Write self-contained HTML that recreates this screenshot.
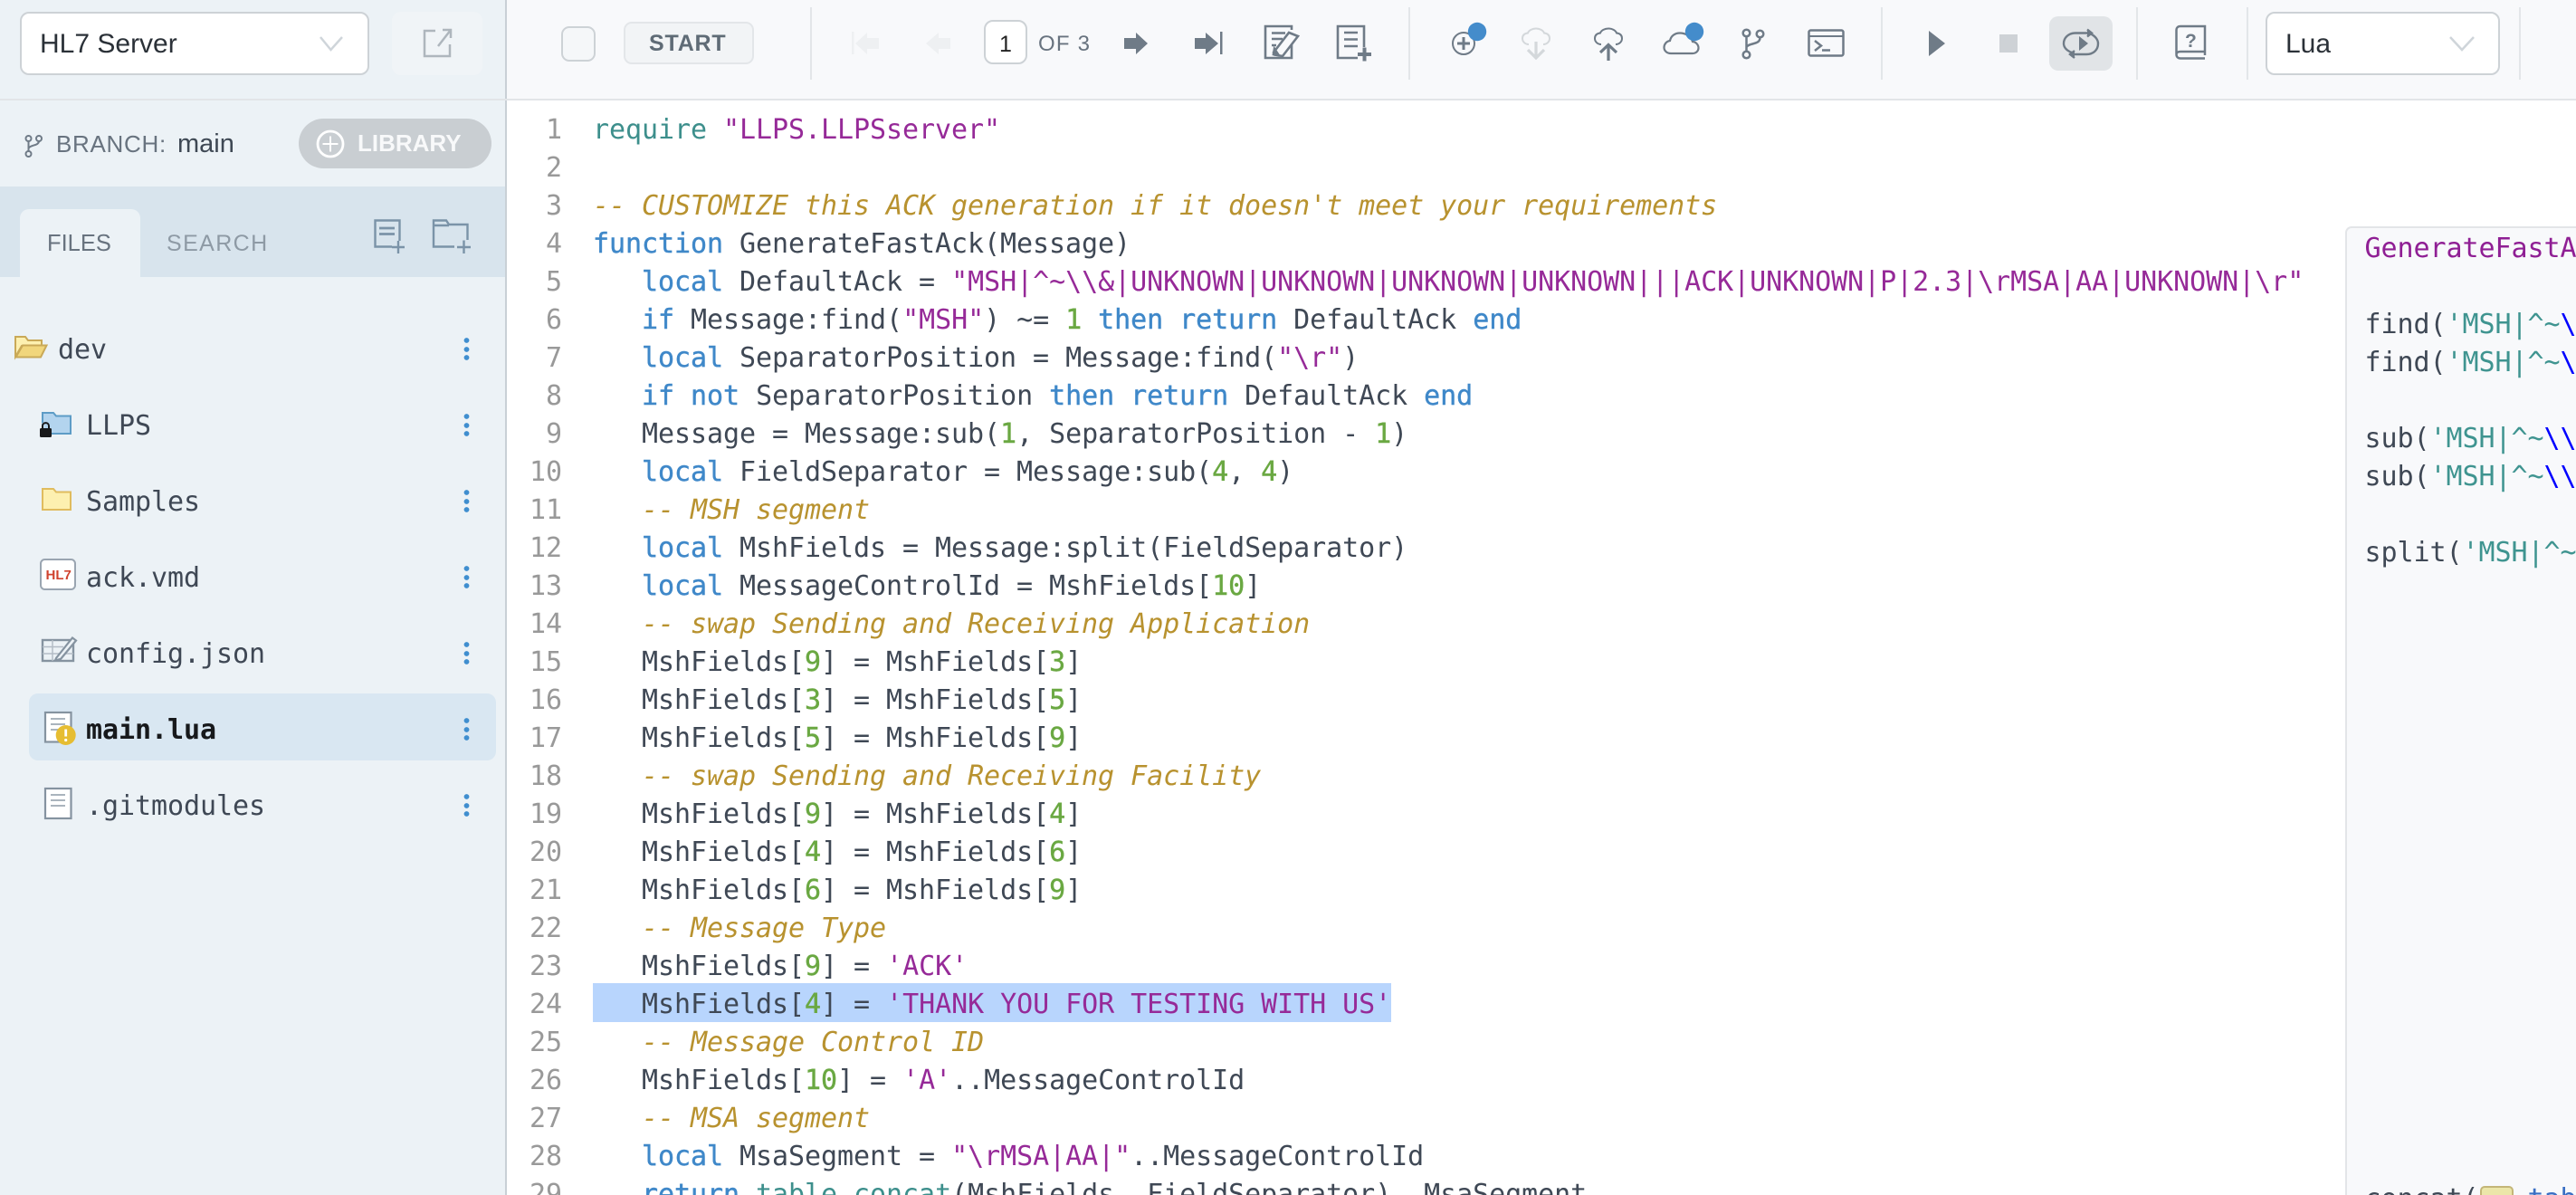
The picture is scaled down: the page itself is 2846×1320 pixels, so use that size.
<!DOCTYPE html>
<html>
<head>
<meta charset="utf-8">
<title>HL7 Server</title>
<style>
html,body{margin:0;padding:0;background:#fff}
#p{position:relative;width:2846px;height:1320px;overflow:hidden;background:#fff;font-family:"Liberation Sans",sans-serif}
.a{position:absolute;white-space:pre}
.m{font-family:"DejaVu Sans Mono","Liberation Mono",monospace;font-size:30px;letter-spacing:-.06px;line-height:42px;color:#3f4855}
.k{color:#3f88c9;-webkit-text-stroke:.4px #3f88c9}.s{color:#962a98}.c{color:#b8922f;font-style:italic}.n{color:#6aa842;-webkit-text-stroke:.4px #6aa842}.t{color:#3d8f8c}
.f{left:95px;height:42px}
.box{position:absolute;box-sizing:border-box}
svg{position:absolute;left:0;top:0}
.q{color:#3f9490}.b{color:#0000ff}
</style>
</head>
<body>
<div id="p">
<!-- backgrounds -->
<div class="box" style="left:0;top:0;width:558px;height:1320px;background:#ecf2f6"></div>
<div class="box" style="left:558px;top:0;width:2px;height:1320px;background:#c9d0d6"></div>
<div class="box" style="left:560px;top:0;width:2286px;height:109px;background:#f8f9fb"></div>
<div class="box" style="left:0;top:109px;width:2846px;height:2px;background:#e2e5e8"></div>
<div class="box" style="left:0;top:206px;width:558px;height:100px;background:#d8e4ed"></div>
<div class="box" style="left:22px;top:231px;width:133px;height:75px;background:#ecf2f6;border-radius:10px 10px 0 0"></div>
<div class="box" style="left:32px;top:766px;width:516px;height:74px;background:#d9e7f2;border-radius:10px"></div>

<!-- selects & buttons -->
<div class="box" style="left:22px;top:13px;width:386px;height:70px;background:#fff;border:2.5px solid #cdd2d6;border-radius:10px"></div>
<div class="box" style="left:433px;top:13px;width:100px;height:70px;background:#f0f4f7;border-radius:10px"></div>
<div class="box" style="left:620px;top:29px;width:38px;height:39px;background:#f5f7f9;border:2.5px solid #cdd2d6;border-radius:9px"></div>
<div class="box" style="left:689px;top:24px;width:144px;height:47px;background:#f2f4f6;border:2.5px solid #e3e6e9;border-radius:9px"></div>
<div class="box" style="left:1087px;top:22px;width:48px;height:49px;background:#fff;border:2.5px solid #cdd2d6;border-radius:10px"></div>
<div class="box" style="left:2264px;top:18px;width:70px;height:60px;background:#e1e4e7;border-radius:10px"></div>
<div class="box" style="left:2503px;top:13px;width:259px;height:70px;background:#fff;border:2.5px solid #cdd2d6;border-radius:10px"></div>
<div class="box" style="left:330px;top:131px;width:213px;height:55px;background:#c9ced2;border-radius:28px"></div>
<!-- dividers -->
<div class="box" style="left:895px;top:8px;width:2px;height:80px;background:#e3e6e9"></div>
<div class="box" style="left:1556px;top:8px;width:2px;height:80px;background:#e3e6e9"></div>
<div class="box" style="left:2078px;top:8px;width:2px;height:80px;background:#e3e6e9"></div>
<div class="box" style="left:2360px;top:8px;width:2px;height:80px;background:#e3e6e9"></div>
<div class="box" style="left:2482px;top:8px;width:2px;height:80px;background:#e3e6e9"></div>
<div class="box" style="left:2783px;top:8px;width:2px;height:80px;background:#e3e6e9"></div>

<!-- UI text -->
<div class="a" style="left:44px;top:31px;font-size:30px;line-height:36px;color:#2b3138">HL7 Server</div>
<div class="a" style="left:2525px;top:31px;font-size:30px;line-height:36px;color:#2b3138">Lua</div>
<div class="a" style="left:717px;top:34px;font-size:25px;line-height:28px;font-weight:bold;letter-spacing:.8px;color:#5f6b76">START</div>
<div class="a" style="left:1104px;top:35px;font-size:25px;line-height:28px;color:#222">1</div>
<div class="a" style="left:1147px;top:35px;font-size:24px;line-height:28px;letter-spacing:1.2px;color:#68737f">OF 3</div>
<div class="a" style="left:62px;top:144px;font-size:26px;line-height:30px;letter-spacing:.7px;color:#68737f">BRANCH:</div>
<div class="a" style="left:196px;top:143px;font-size:29px;line-height:32px;color:#3e4854">main</div>
<div class="a" style="left:395px;top:143px;font-size:26px;line-height:30px;font-weight:bold;color:#f8f9fa">LIBRARY</div>
<div class="a" style="left:52px;top:255px;font-size:25.5px;line-height:28px;color:#68737f">FILES</div>
<div class="a" style="left:184px;top:255px;font-size:25px;line-height:28px;letter-spacing:1.4px;color:#8e9aa5">SEARCH</div>

<!-- file tree -->
<div class="a m" style="left:64px;top:366px">dev</div>
<div class="a m f" style="top:450px">LLPS</div>
<div class="a m f" style="top:534px">Samples</div>
<div class="a m f" style="top:618px">ack.vmd</div>
<div class="a m f" style="top:702px">config.json</div>
<div class="a m f" style="top:786px;font-weight:bold;color:#17191c">main.lua</div>
<div class="a m f" style="top:870px">.gitmodules</div>

<!-- code highlight -->
<div class="box" style="left:655px;top:1086px;width:882px;height:43px;background:#b8d5fd"></div>

<!-- line numbers -->
<div class="a m" style="left:561px;width:60px;top:123px;text-align:right;color:#999">1
2
3
4
5
6
7
8
9
10
11
12
13
14
15
16
17
18
19
20
21
22
23
24
25
26
27
28
29</div>

<!-- code -->
<div class="a m" style="left:655px;top:123px"><span class="t">require</span> <span class="s">"LLPS.LLPSserver"</span>

<span class="c">-- CUSTOMIZE this ACK generation if it doesn't meet your requirements</span>
<span class="k">function</span> GenerateFastAck(Message)
   <span class="k">local</span> DefaultAck = <span class="s">"MSH|^~\\&amp;|UNKNOWN|UNKNOWN|UNKNOWN|UNKNOWN|||ACK|UNKNOWN|P|2.3|\rMSA|AA|UNKNOWN|\r"</span>
   <span class="k">if</span> Message:find(<span class="s">"MSH"</span>) ~= <span class="n">1</span> <span class="k">then</span> <span class="k">return</span> DefaultAck <span class="k">end</span>
   <span class="k">local</span> SeparatorPosition = Message:find(<span class="s">"\r"</span>)
   <span class="k">if</span> <span class="k">not</span> SeparatorPosition <span class="k">then</span> <span class="k">return</span> DefaultAck <span class="k">end</span>
   Message = Message:sub(<span class="n">1</span>, SeparatorPosition - <span class="n">1</span>)
   <span class="k">local</span> FieldSeparator = Message:sub(<span class="n">4</span>, <span class="n">4</span>)
   <span class="c">-- MSH segment</span>
   <span class="k">local</span> MshFields = Message:split(FieldSeparator)
   <span class="k">local</span> MessageControlId = MshFields[<span class="n">10</span>]
   <span class="c">-- swap Sending and Receiving Application</span>
   MshFields[<span class="n">9</span>] = MshFields[<span class="n">3</span>]
   MshFields[<span class="n">3</span>] = MshFields[<span class="n">5</span>]
   MshFields[<span class="n">5</span>] = MshFields[<span class="n">9</span>]
   <span class="c">-- swap Sending and Receiving Facility</span>
   MshFields[<span class="n">9</span>] = MshFields[<span class="n">4</span>]
   MshFields[<span class="n">4</span>] = MshFields[<span class="n">6</span>]
   MshFields[<span class="n">6</span>] = MshFields[<span class="n">9</span>]
   <span class="c">-- Message Type</span>
   MshFields[<span class="n">9</span>] = <span class="s">'ACK'</span>
   MshFields[<span class="n">4</span>] = <span class="s">'THANK YOU FOR TESTING WITH US'</span>
   <span class="c">-- Message Control ID</span>
   MshFields[<span class="n">10</span>] = <span class="s">'A'</span>..MessageControlId
   <span class="c">-- MSA segment</span>
   <span class="k">local</span> MsaSegment = <span class="s">"\rMSA|AA|"</span>..MessageControlId
   <span class="k">return</span> <span class="t">table.concat</span>(MshFields, FieldSeparator)..MsaSegment</div>

<!-- right panel -->
<div class="box" style="left:2591px;top:250px;width:260px;height:1080px;background:#f8f9fb;border-left:2.5px solid #e3e5e8;border-top:2.5px solid #e3e5e8;border-radius:7px 0 0 0;overflow:hidden">
<div class="a m" style="left:19.5px;top:1.5px"><span style="color:#8f1f94">GenerateFastAck</span>

find(<span class="q">'MSH|^~</span><span class="b">\\</span>
find(<span class="q">'MSH|^~</span><span class="b">\\</span>

sub(<span class="q">'MSH|^~</span><span class="b">\\\\</span>
sub(<span class="q">'MSH|^~</span><span class="b">\\\\</span>

split(<span class="q">'MSH|^~</span><span class="b">\\</span>
















concat(   <span style="color:#3a6fc4">table</span></div>
<div class="box" style="left:147px;top:1058px;width:37px;height:30px;background:#ece6a9;border:2px solid #c4b678;border-radius:5px"></div>
</div>

<svg width="2846" height="1320" viewBox="0 0 2846 1320" fill="none">
<!-- select chevrons -->
<path d="M354 41L365.5 55L378 41" stroke="#cfd5da" stroke-width="2.5"/>
<path d="M2707 41L2720 55L2733 41" stroke="#cfd5da" stroke-width="2.5"/>
<!-- open external -->
<g stroke="#aeb6bd" stroke-width="2.5"><path d="M481 34H469V62H497V49"/><path d="M484 51L498 33M489 33H498V42"/></g>
<!-- nav arrows -->
<path fill="#eef0f2" d="M941 35h2.5v25H941zM971 42H958V36L945 48L958 60V54H971zM1050 42H1037V36L1023 48L1037 60V54H1050z"/>
<path fill="#6f7b87" d="M1242 42H1255V36L1268 48L1255 60V54H1242zM1320 42H1332V36L1346 48L1332 60V54H1320zM1348 35h2.5v25H1348z"/>
<!-- edit -->
<g stroke="#6f7b87" stroke-width="2.6"><path d="M1427 33V29H1398V64H1427V48"/><path d="M1405 36.5H1420M1405 43H1417M1405 50H1410" stroke-width="2.4"/><path d="M1407 58L1424 36L1434 40L1417 62L1408 60.5Z" fill="#f8f9fb"/><path d="M1408 54L1407 60L1412 60Z" fill="#6f7b87"/></g>
<!-- new file -->
<g stroke="#6f7b87" stroke-width="2.6"><path d="M1500 64H1478V29H1507V52"/><path d="M1485 36H1500M1485 43.5H1500M1485 51H1500"/><path d="M1500 60H1515M1507.5 52.5V67.5" stroke-width="4"/></g>
<!-- add -->
<circle cx="1617" cy="48" r="12" stroke="#6f7b87" stroke-width="2"/>
<path d="M1610 48H1624M1617 41V55" stroke="#6f7b87" stroke-width="3"/>
<circle cx="1632" cy="35" r="10.2" fill="#448ccb"/>
<!-- cloud down -->
<g stroke="#d4d8db" stroke-width="2"><path d="M1689 49C1685 49 1682 46 1682 42.500C1682 39 1684 37 1688 36.500C1689 33.500 1693 31.500 1697 31.500C1701 31.500 1705 33.500 1706 36.500C1710 37 1712 39 1712 42.500C1712 46 1709 49 1705 49"/><path d="M1697 46V63M1688 55L1697 64L1706 55" stroke-width="3.200"/></g>
<!-- cloud up -->
<g stroke="#6f7b87" stroke-width="2"><path d="M1769 49C1765 49 1762 46 1762 42.500C1762 39 1764 37 1768 36.500C1769 33.500 1773 31.500 1777 31.500C1781 31.500 1785 33.500 1786 36.500C1790 37 1792 39 1792 42.500C1792 46 1789 49 1785 49"/><path d="M1777 50V67M1768 58L1777 49.500L1786 58" stroke-width="3.200"/></g>
<!-- cloud -->
<path d="M1846 59L1870 59C1874 59 1876.500 56 1876.500 53C1876.500 49 1873 46 1870 46C1868 40 1862 36.500 1856 36.500C1850 36.500 1846 40 1845 45C1841 45.500 1838.500 49 1838.500 52.500C1838.500 56 1841.500 59 1846 59Z" stroke="#6f7b87" stroke-width="2.200"/>
<circle cx="1872" cy="35" r="10.200" fill="#448ccb"/>
<!-- branch -->
<g stroke="#6f7b87" stroke-width="2.500"><circle cx="1929.500" cy="36.500" r="3.800"/><circle cx="1944.500" cy="37.500" r="3.800"/><circle cx="1929.500" cy="60.500" r="3.800"/><path d="M1929.500 40.500V56.500M1929.500 52C1932 47 1944.500 50 1944.500 41.500"/></g>
<!-- terminal -->
<g stroke="#6f7b87" stroke-width="2.500"><rect x="1998.500" y="33.500" width="38" height="28" rx="2"/><path d="M1998.500 40H2036.500" stroke-width="2"/><path d="M2005 45L2012 50.500L2005 56"/><path d="M2013 55.500H2022"/></g>
<!-- play / stop -->
<path fill="#6f7b87" d="M2131 34L2149 48L2131 62z"/>
<rect x="2209" y="38" width="20" height="20" fill="#ced2d6"/>
<!-- loop -->
<g stroke="#6f7b87" stroke-width="2.400"><path d="M2289 58C2283 56 2280 52 2280 48C2280 42 2285 36.500 2293 36.500H2309"/><path d="M2306 32.500L2311 36.500L2306 40.500" fill="#6f7b87"/><path d="M2310 37.500C2315 40 2318 44 2318 48C2318 55 2313 60 2305 60H2289"/><path d="M2292 56L2287 60L2292 64" fill="#6f7b87"/></g>
<path fill="#6f7b87" d="M2297 40L2307 48L2297 56z"/>
<!-- help book -->
<g stroke="#6f7b87" stroke-width="2.500"><path d="M2436 61V29H2409C2406 29 2404.500 31 2404.500 33V60C2404.500 63 2406.500 64.500 2409 64.500H2436M2404.500 60C2404.500 58 2406.500 57 2409 57H2436"/></g>
<text x="2414" y="52" font-family="Liberation Sans" font-size="21" font-weight="bold" fill="#6f7b87">?</text>
<!-- sidebar branch -->
<g stroke="#6f7b87" stroke-width="2"><circle cx="31.500" cy="153" r="3"/><circle cx="43" cy="153" r="3"/><circle cx="31.500" cy="170" r="3"/><path d="M31.500 156V167M31.500 164C33 160 43 161 43 156"/></g>
<!-- library plus -->
<circle cx="365" cy="159" r="14" stroke="#fff" stroke-width="2.800"/>
<path d="M356.500 159H373.500M365 150.500V167.500" stroke="#fff" stroke-width="2"/>
<!-- new file / folder tab icons -->
<g stroke="#7b93a8" stroke-width="2.400"><path d="M433 272.500H414.500V243.500H441.500V266"/><path d="M419 252H436M419 258.500H436" stroke-width="2.800"/><path d="M433 273H447M440 266V280"/></g>
<g stroke="#7b93a8" stroke-width="2.400"><path d="M502 272.500H479V243.500H493L496 248H516.500V265M479 249H496"/><path d="M505 273H520M512.500 265.500V280"/></g>
<!-- tree dots -->
<g fill="#3f8ecf">
<circle cx="515.500" cy="376" r="2.900"/><circle cx="515.500" cy="386" r="2.900"/><circle cx="515.500" cy="395" r="2.900"/>
<circle cx="515.500" cy="460" r="2.900"/><circle cx="515.500" cy="470" r="2.900"/><circle cx="515.500" cy="479" r="2.900"/>
<circle cx="515.500" cy="544" r="2.900"/><circle cx="515.500" cy="554" r="2.900"/><circle cx="515.500" cy="563" r="2.900"/>
<circle cx="515.500" cy="628" r="2.900"/><circle cx="515.500" cy="638" r="2.900"/><circle cx="515.500" cy="647" r="2.900"/>
<circle cx="515.500" cy="712" r="2.900"/><circle cx="515.500" cy="722" r="2.900"/><circle cx="515.500" cy="731" r="2.900"/>
<circle cx="515.500" cy="796" r="2.900"/><circle cx="515.500" cy="806" r="2.900"/><circle cx="515.500" cy="815" r="2.900"/>
<circle cx="515.500" cy="880" r="2.900"/><circle cx="515.500" cy="890" r="2.900"/><circle cx="515.500" cy="899" r="2.900"/>
</g>
<!-- dev open folder -->
<path d="M17 394V372H28L31 376H46V382H24L17 394Z" fill="#fdf0b0" stroke="#c9a958" stroke-width="2"/>
<path d="M17.500 394.500L25 381.500H51.500L45 394.500Z" fill="#f1d67c" stroke="#c9a958" stroke-width="2"/>
<!-- LLPS folder -->
<path d="M47 479V456H59L62 459.500H78V479Z" fill="#b3d4ee" stroke="#5d9cc6" stroke-width="2"/>
<path d="M47.500 472V467" stroke="#ecf2f6" stroke-width="2"/>
<rect x="44" y="473" width="13" height="10" rx="1.500" fill="#18191b"/>
<path d="M47 474V470.500C47 466 54 466 54 470.500V474" stroke="#18191b" stroke-width="2"/>
<!-- Samples folder -->
<path d="M47 563V540H59L62 543.500H78V563Z" fill="#fdf0b0" stroke="#e0bc5e" stroke-width="2"/>
<!-- HL7 -->
<rect x="45" y="618" width="38" height="33" rx="4.500" fill="#fff" stroke="#9aa5b1" stroke-width="2"/>
<text x="50.500" y="640" font-family="Liberation Sans" font-size="15" font-weight="bold" fill="#d0432f">HL7</text>
<!-- config -->
<g stroke="#8593a0" stroke-width="2.400"><rect x="47" y="707" width="34" height="23"/></g>
<path d="M47 714.500H70M47 722H81M58 707V730" stroke="#b3bcc5" stroke-width="1.500"/>
<path d="M62 727L80 704.500L84 707.500L67 728L61 729.500Z" fill="#ecf2f6" stroke="#8593a0" stroke-width="2.200"/>
<!-- main.lua doc -->
<rect x="50" y="787" width="28.500" height="32.500" fill="#fff" stroke="#8593a0" stroke-width="2.200"/>
<path d="M56 794H72M56 800H72M56 806H72" stroke="#aab4bd" stroke-width="2"/>
<circle cx="72.700" cy="812" r="11" fill="#e6bd32"/>
<path d="M72.700 805.500V813.500" stroke="#fff" stroke-width="2.800"/><circle cx="72.700" cy="817.500" r="1.600" fill="#fff"/>
<!-- gitmodules doc -->
<rect x="50" y="871" width="28.500" height="33" fill="#fff" stroke="#8593a0" stroke-width="2.200"/>
<path d="M56 878H72M56 884H72M56 890H72" stroke="#aab4bd" stroke-width="2"/>
</svg>
</div>
</body>
</html>
